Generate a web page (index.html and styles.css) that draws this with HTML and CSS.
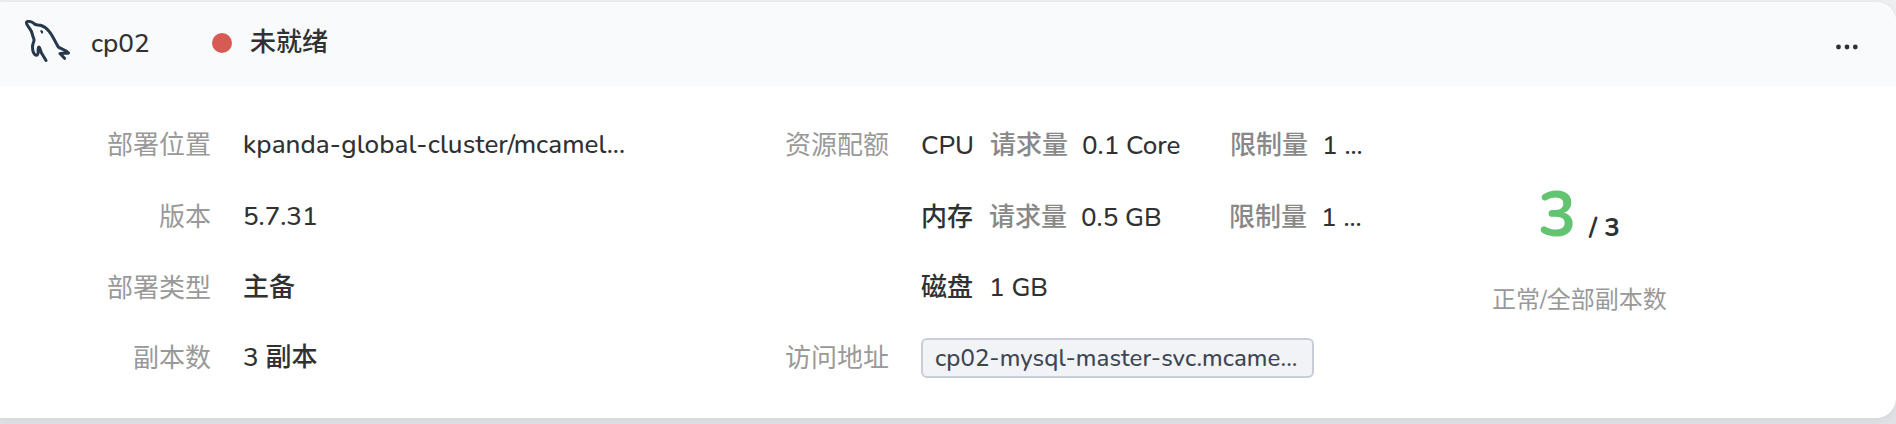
FILE: index.html
```
<!DOCTYPE html>
<html lang="zh-CN">
<head>
<meta charset="utf-8">
<title>cp02</title>
<link rel="stylesheet" href="styles.css">
</head>
<body>
<article class="card">
  <header class="head">
    <svg class="logo" viewBox="0 0 50 46" fill="none" stroke="#26384c" stroke-width="3" stroke-linecap="round" stroke-linejoin="round">
      <path d="M36 40.500 31.500 33 C30.500 31 30 27 28.700 27 C27 28.500 29.500 34 27 35 C24 36 22.500 31 22.500 27 C22.500 23 25 21 23.700 18.500 C22 15 22.500 12 20 9 C18.500 6.500 16 4.500 16.500 2.300 C17.500 0.500 22 1.500 24 3.500 C25.500 5.500 27.500 4.500 30.500 5.300 C40 8 43.500 19 48.300 27 C51 29 55 29.500 58.500 33 C55 34 52 32.500 50 33.500 L54.500 38.300" transform="translate(-12)"/>
      <path d="M30.800 11 C32.500 10.700 33 12 32 13 Z" transform="translate(-12)" stroke-width="1.300" fill="#26384c"/>
    </svg>
    <span class="name">cp02</span>
    <i class="dot"></i>
    <span class="status">未就绪</span>
    <svg class="more" viewBox="0 0 24 8" fill="#303133"><circle cx="3.500" cy="4" r="2.400"/><circle cx="12" cy="4" r="2.400"/><circle cx="20.300" cy="4" r="2.400"/></svg>
  </header>
  <section class="body">
    <dl class="list info">
      <dt>部署位置</dt><dd class="path">kpanda-global-cluster/mcamel...</dd>
      <dt>版本</dt><dd>5.7.31</dd>
      <dt>部署类型</dt><dd>主备</dd>
      <dt>副本数</dt><dd>3 副本</dd>
    </dl>
    <dl class="list quota">
      <dt>资源配额</dt><dd class="res"><span class="kind">CPU</span><span class="key">请求量</span><span class="amount">0.1 Core</span><span class="key">限制量</span><span>1 ...</span></dd>
      <dt></dt><dd class="res mem"><span class="kind">内存</span><span class="key">请求量</span><span class="amount">0.5 GB</span><span class="key">限制量</span><span>1 ...</span></dd>
      <dt></dt><dd class="res disk"><span class="kind">磁盘</span><span class="amount">1 GB</span></dd>
      <dt>访问地址</dt><dd><span class="chip">cp02-mysql-master-svc.mcame...</span></dd>
    </dl>
    <div class="replicas">
      <div class="nums"><b class="ready">3</b><b class="total">/ 3</b></div>
      <div class="caption">正常/全部副本数</div>
    </div>
  </section>
</article>
</body>
</html>
```
FILE: styles.css
```
* { box-sizing: border-box; }
body {
  margin: 0;
  height: 424px;
  padding-top: 2px;
  overflow: hidden;
  background: linear-gradient(#eeeff1, #e0e1e5);
  color: #303133;
  font: 500 26px/36px Nunito, Lato, "Noto Sans CJK SC", sans-serif;
}
.card {
  height: 416px;
  background: #fff;
  border-radius: 0 20px 20px 0;
  overflow: hidden;
  box-shadow: 0 2px 10px rgba(40, 44, 60, .06);
}
.head {
  display: flex;
  align-items: center;
  height: 84px;
  padding: 0 37px 2px 22px;
  background: #f9fafc;
}
.logo { width: 50px; height: 46px; margin-right: 19px; }
.name { width: 121px; padding-top: 2px; }
.dot { width: 20px; height: 20px; border-radius: 50%; background: #d75a55; }
.status { margin-left: 18px; }
.more { width: 24px; height: 8px; margin: 7px 0 0 auto; }
.body { display: flex; padding-top: 25px; }
.list {
  display: grid;
  grid-template-columns: 104px 1fr;
  grid-template-rows: 72px 71px 70px 70px;
  column-gap: 32px;
  align-items: start;
  margin: 0;
  padding-top: 16px;
}
.info { width: 678px; padding-left: 107px; }
.quota { width: 707px; padding-left: 107px; }
.list dt { padding-top: 1px; color: #999; font-weight: 400; text-align: right; white-space: nowrap; }
.list dd { margin: 0; white-space: nowrap; }
.path { letter-spacing: .08px; }
.res { display: flex; padding-top: 1px; }
.disk { padding-top: 0; }
.kind { width: 69px; }
.mem .kind, .disk .kind { width: 68px; }
.key { width: 92px; color: #888; }
.amount { width: 148px; }
.chip {
  display: block;
  width: 393px;
  height: 40px;
  margin-top: -2px;
  padding: 0 12px;
  border: 2px solid #cacdd9;
  border-radius: 6px;
  background: #f2f3f7;
  color: #3d4653;
  font-size: 24px;
  letter-spacing: .08px;
}
.replicas { width: 390px; }
.nums { display: flex; align-items: baseline; padding: 69px 0 0 153px; line-height: 70px; }
.ready { width: 51px; color: #62c471; font-size: 64px; }
.total { font-size: 26px; }
.caption { margin-top: 19px; padding-left: 107px; color: #999; font-size: 24px; font-weight: 400; }
```
